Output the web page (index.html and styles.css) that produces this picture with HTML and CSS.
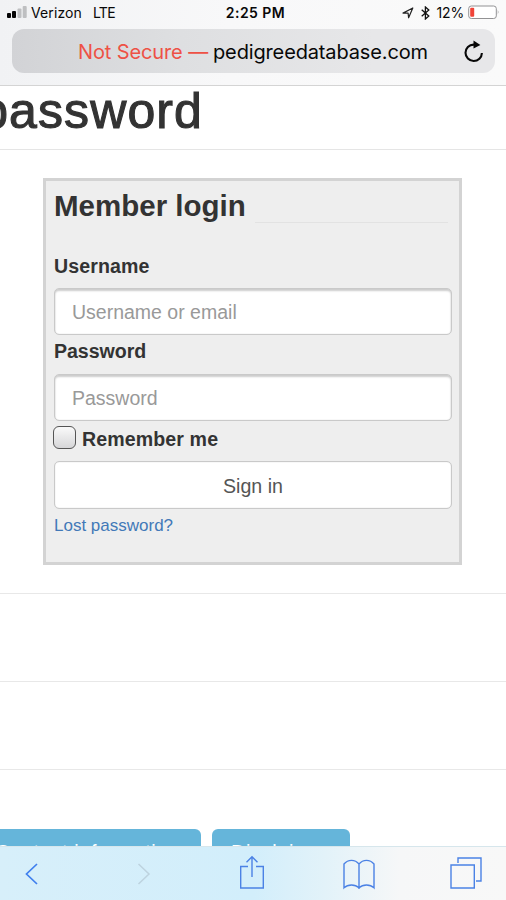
FILE: index.html
```html
<!DOCTYPE html>
<html lang="en">
<head>
<meta charset="utf-8">
<title>Pedigree Database</title>
<link rel="stylesheet" href="styles.css">
</head>
<body>
<header class="browser">
  <div class="status">
    <div class="carrier">
      <svg class="signal" width="20" height="12" viewBox="0 0 20 12"><rect y="7" width="4" height="5" rx="1" fill="#050505"/><rect x="5" y="5" width="4" height="7" rx="1" fill="#050505"/><rect x="10.5" y="2.5" width="4" height="9.5" rx="1" fill="#bebfc1"/><rect x="15.7" width="4" height="12" rx="1" fill="#bebfc1"/></svg>
      <span class="operator">Verizon</span><span class="network">LTE</span>
    </div>
    <span class="time">2:25 PM</span>
    <div class="power">
      <svg class="location" width="12" height="12" viewBox="0 0 12 12"><path d="M1 6.1L10.8 1 6.6 10.8 6.1 6.1Z" fill="none" stroke="#222" stroke-width="1.2" stroke-linejoin="round"/></svg>
      <svg class="bluetooth" width="9" height="14" viewBox="0 0 9 14"><path d="M.7 3.8L7.8 10 4.4 13V1L7.8 4 .7 10.2" fill="none" stroke="#111" stroke-width="1.3"/></svg>
      <span class="percent">12%</span>
      <svg class="battery" width="32" height="15" viewBox="0 0 32 15"><rect x=".7" y="1" width="27.6" height="12.5" rx="2.6" fill="#fff" stroke="#929294"/><rect x="2.2" y="2.7" width="4" height="9" rx="1" fill="#f04438"/><path d="M29.8 5q1.5 2.2 0 4.5z" fill="#929294"/></svg>
    </div>
  </div>
  <div class="address">
    <span class="warning">Not Secure —</span><span class="domain">pedigreedatabase.com</span>
    <svg class="reload" width="22" height="24" viewBox="0 0 22 24"><path d="M12 4.6H10.6A8.2 8.2 0 1 0 18.9 13" fill="none" stroke="#080808" stroke-width="2.1"/><path d="M10.5 0.4L17.4 4.9 10.5 8.4Z" fill="#080808"/></svg>
  </div>
</header>
<main class="page">
  <div class="title-bar"><h1 class="title">password</h1></div>
  <section class="login">
    <div class="login-head"><h2>Member login</h2></div>
    <form class="form">
      <label class="label" for="user">Username</label>
      <input class="field" id="user" type="text" placeholder="Username or email">
      <label class="label label-pass" for="pass">Password</label>
      <input class="field" id="pass" type="password" placeholder="Password">
      <label class="remember"><input class="check" type="checkbox"><span>Remember me</span></label>
      <button class="submit" type="button">Sign in</button>
      <a class="lost" href="#">Lost password?</a>
    </form>
  </section>
  <hr class="rule"><hr class="rule"><hr class="rule">
  <div class="links"><a class="pill contact">Contact information</a><a class="pill disclaimer">Disclaimer</a></div>
</main>
<nav class="toolbar">
  <svg class="back" width="14" height="24" viewBox="0 0 14 24"><path d="M12 2L1.5 12 12 22" fill="none" stroke="#3f7fee" stroke-width="1.7"/></svg>
  <svg class="forward" width="14" height="24" viewBox="0 0 14 24"><path d="M1.5 2L12 12 1.5 22" fill="none" stroke="#bdd3df" stroke-width="1.5"/></svg>
  <svg class="share" width="26" height="34" viewBox="0 0 26 34"><path d="M9 11.5H1.7V33H24.3V11.5H17M13 22V2M7.5 7.3L13 1.8 18.5 7.3" fill="none" stroke="#4b82e5" stroke-width="1.4"/></svg>
  <svg class="book" width="32" height="31" viewBox="0 0 32 31"><path d="M16 5C12 .2 5 .2 1 5V28.8C5 25 12 25 16 28.8C20 25 27 25 31 28.8V5C27 .2 20 .2 16 5V30" fill="none" stroke="#4b82e5" stroke-width="1.4"/></svg>
  <svg class="tabs" width="32" height="32" viewBox="0 0 32 32"><path d="M1 8H24.3V31H1ZM8 6V1H31V24H26" fill="none" stroke="#4b82e5" stroke-width="1.4"/></svg>
</nav>
</body>
</html>
```
FILE: styles.css
```css
* { box-sizing: border-box; }
body { margin: 0; width: 506px; height: 900px; overflow: hidden; display: flex; flex-direction: column; background: #fff; color: #333; font-family: "Liberation Sans", Arial, sans-serif; }
svg { display: block; flex: none; }
.browser { height: 86px; flex: none; border-bottom: 1px solid #d4d4d4; background: linear-gradient(90deg, #f1f2f4, #f8f8f9 45%, #fafafa); color: #080808; font-family: Inter, sans-serif; }
.status { height: 29px; padding: 4px 7px 0; display: grid; grid-template-columns: 1fr auto 1fr; font-size: 14px; line-height: 18px; }
.carrier, .power { display: flex; align-items: flex-start; }
.signal { margin: 2px 4px 0 0; }
.operator { width: 62px; letter-spacing: .1px; }
.network { letter-spacing: -.7px; }
.time { padding-left: 5px; font-weight: 600; font-size: 14px; letter-spacing: .45px; }
.power { justify-content: flex-end; margin-right: -1px; }
.location { margin: 3px 7px 0 0; }
.bluetooth { margin: 2px 7px 0 0; }
.percent { margin-right: 4px; letter-spacing: -.2px; }
.battery { margin-top: 1px; }
.address { height: 44px; margin: 0 11px 0 12px; padding: 1px 10px 0 66px; display: flex; align-items: center; border-radius: 12px; background: linear-gradient(90deg, #d2d3d6, #dedfe1 35%, #e7e7e9 75%); font-size: 20px; line-height: 44px; white-space: nowrap; }
.warning { width: 135px; color: #ee5145; letter-spacing: -.12px; }
.domain { letter-spacing: -.14px; }
.reload { margin-left: auto; }
.page { height: 760px; flex: none; overflow: hidden; }
.title-bar { height: 64px; border-bottom: 1px solid #e5e5e5; }
.title { width: 203px; margin: 0; display: flex; justify-content: flex-end; font-size: 50px; line-height: 50px; font-weight: 400; letter-spacing: 1.1px; -webkit-text-stroke: 1.1px #333; }
.login { width: 419px; height: 387px; margin: 28px 0 0 43px; padding: 7px 8px; border: 3px solid #d3d3d3; background: #eee; }
.login-head { display: flex; height: 61px; }
.login-head h2 { margin: 0; font-size: 29.5px; line-height: 36px; white-space: nowrap; }
.login-head::after { content: ""; flex: 1; height: 34px; margin: 0 3px 0 9px; border-bottom: 1px solid #e2e2e2; }
.form { display: flex; flex-direction: column; }
.label { height: 39px; padding-top: 5px; font-size: 19.6px; line-height: 24px; font-weight: 700; letter-spacing: .1px; }
.label-pass { padding-top: 4px; letter-spacing: -.05px; }
.field { width: 398px; height: 47px; margin: 0; padding: 1px 17px 0; border: 1px solid #c9c9c9; border-radius: 5px; background: #fff; box-shadow: inset 0 2px 2px #ccc, inset 0 0 1px #bbb; font: 19.5px "Liberation Sans", sans-serif; }
.field::placeholder { color: #999; opacity: 1; }
.remember { height: 40px; display: flex; font-size: 19.6px; font-weight: 700; line-height: 37px; letter-spacing: .1px; }
.check { appearance: none; width: 23px; height: 23px; margin: 5px 6px 0 -1px; border: 1.5px solid #555; border-radius: 6px; background: linear-gradient(#fafafa, #d6d6d8); }
.submit { width: 398px; height: 48px; padding: 2px 0 0; border: 1px solid #c9c9c9; border-radius: 5px; background: #fff; box-shadow: inset 0 0 1px #bbb; color: #555; font: 19.6px "Liberation Sans", sans-serif; }
.lost { margin-top: 6px; color: #4279b8; text-decoration: none; font-size: 17px; line-height: 22px; }
.rule { height: 1px; margin: 28px 0 0; border: 0; background: #e8e8e8; }
.rule + .rule { margin-top: 87px; }
.links { display: flex; gap: 11px; margin-top: 59px; }
.pill { height: 49px; border-radius: 6px; background: #65b5da; color: #fff; font-size: 20px; line-height: 24px; padding-top: 11px; white-space: nowrap; }
.contact { width: 201px; border-radius: 0 6px 6px 0; text-indent: -5px; letter-spacing: .6px; }
.disclaimer { width: 138px; padding-left: 19px; letter-spacing: .6px; }
.toolbar { height: 54px; flex: none; display: flex; align-items: flex-start; padding-left: 25px; border-top: 1px solid #d6e6ec; background: linear-gradient(90deg, #d7effa 0, #d2eefb 50%, #e2f2f9 64%, #f6f7f8 79%, #f8f8f8 100%); }
.back { margin-top: 15px; }
.forward { margin: 15px 0 0 98px; }
.share { margin: 8px 0 0 88px; }
.book { margin: 12px 0 0 78px; }
.tabs { margin: 10px 0 0 75px; }
```
